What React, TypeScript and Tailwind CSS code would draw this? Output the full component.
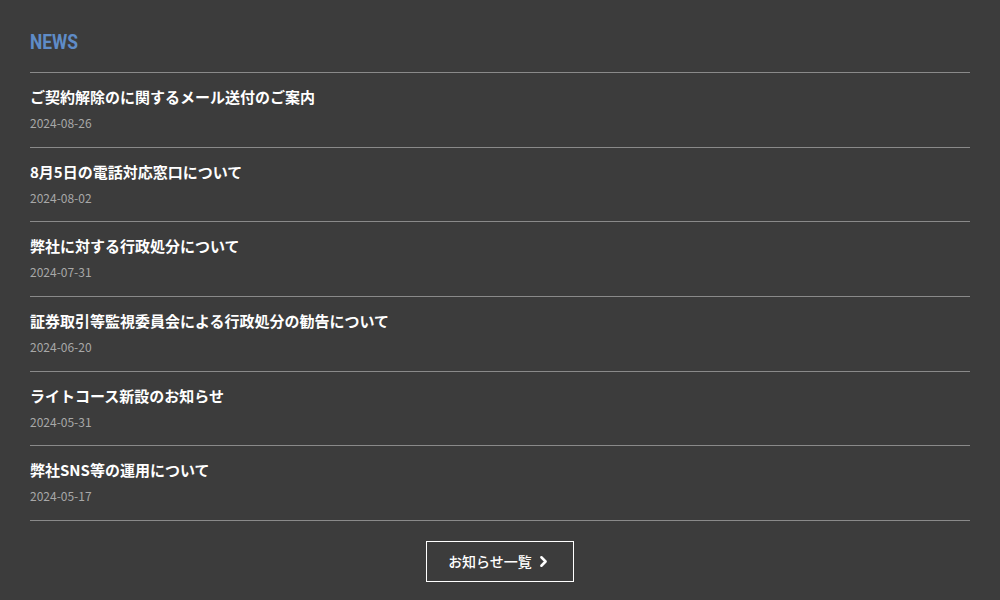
import { ChevronRight } from "lucide-react";

interface NewsItem {
  title: string;
  date: string;
}

const news: NewsItem[] = [
  { title: "ご契約解除のに関するメール送付のご案内", date: "2024-08-26" },
  { title: "8月5日の電話対応窓口について", date: "2024-08-02" },
  { title: "弊社に対する行政処分について", date: "2024-07-31" },
  { title: "証券取引等監視委員会による行政処分の勧告について", date: "2024-06-20" },
  { title: "ライトコース新設のお知らせ", date: "2024-05-31" },
  { title: "弊社SNS等の運用について", date: "2024-05-17" },
];

export default function App() {
  return (
    <div
      className="w-full min-h-[600px] bg-[#3c3c3c] px-[30px] pt-[28px]"
      style={{ fontFamily: '"Noto Sans CJK JP", "Noto Sans", sans-serif' }}
    >
      <h2
        className="h-[28px] text-[20px] leading-[28px] font-bold text-[#5f8cc7] mb-[16px]"
        style={{ fontFamily: 'Roboto, "Noto Sans", sans-serif' }}
      >
        <span className="inline-block origin-left scale-x-[0.87]">NEWS</span>
      </h2>
      <ul className="border-b border-[#8a8a8a]">
        {news.map((item) => (
          <li
            key={item.date}
            className="h-[74.67px] border-t border-[#8a8a8a] pt-[13px]"
          >
            <p className="h-[22px] text-[15px] leading-[22px] font-bold text-white">
              {item.title}
            </p>
            <p className="mt-[6px] h-[18px] text-[12px] leading-[18px] text-[#a8a8a8]">
              {item.date}
            </p>
          </li>
        ))}
      </ul>
      <div className="flex justify-center pt-[20px]">
        <button className="flex items-center justify-center gap-[3px] w-[148px] h-[41px] border border-white text-white text-[14px] leading-[20px] font-medium">
          <span>お知らせ一覧</span>
          <ChevronRight className="w-[17px] h-[17px]" strokeWidth={3.5} />
        </button>
      </div>
    </div>
  );
}
